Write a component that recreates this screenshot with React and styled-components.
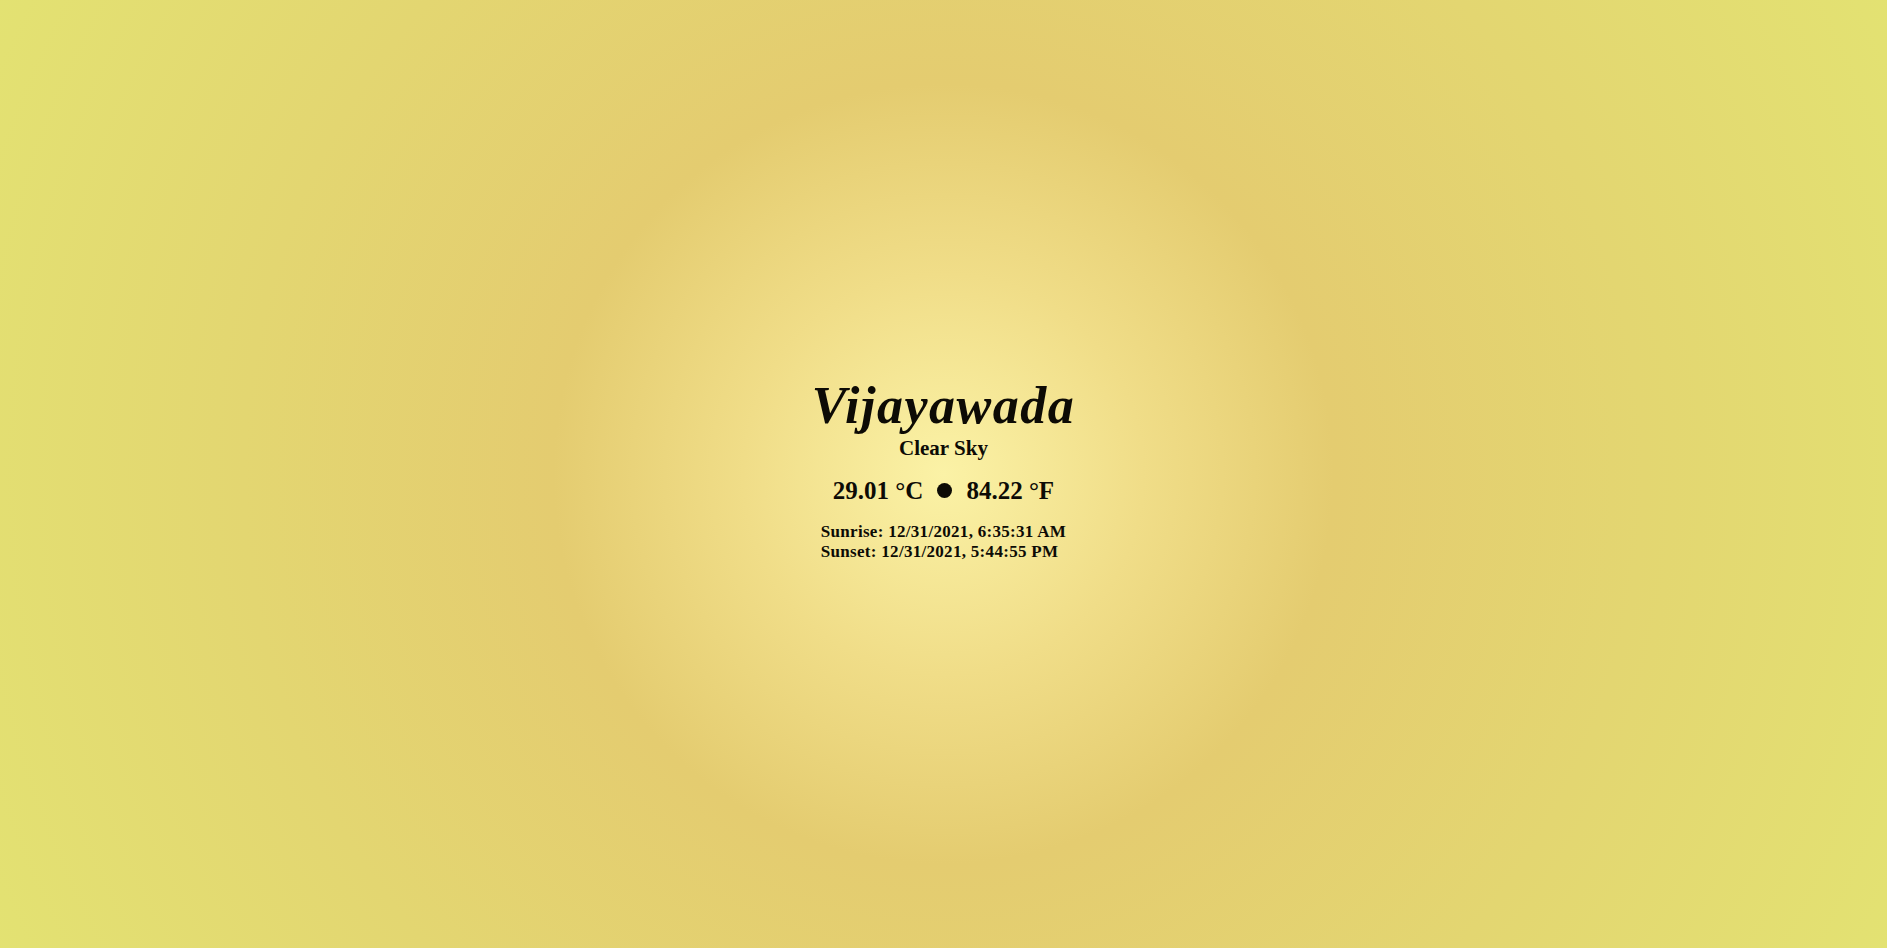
import React from "react";
import styled, { createGlobalStyle } from "styled-components";

const GlobalStyle = createGlobalStyle`
  html, body { margin: 0; padding: 0; }
  body {
    font-family: "Liberation Serif", "DejaVu Serif", serif;
    color: #0d0b05;
  }
`;

const Page = styled.main`
  min-height: 100vh;
  display: flex;
  align-items: center;
  justify-content: center;
  background: radial-gradient(
    circle at 50% 50%,
    #fbf2a6 0px,
    #f0dd88 200px,
    #e4cc70 390px,
    #e3d671 700px,
    #e3e272 1060px
  );
`;

const Card = styled.section`
  display: flex;
  flex-direction: column;
  align-items: center;
  text-align: center;
  padding-bottom: 9px;
`;

const City = styled.h1`
  margin: 0;
  font-size: 52px;
  line-height: 56px;
  font-weight: 700;
  font-style: italic;
  letter-spacing: 1.5px;
`;

const Condition = styled.p`
  margin: 2px 0 0;
  font-size: 21px;
  line-height: 24px;
  font-weight: 700;
`;

const TempRow = styled.div`
  display: flex;
  align-items: center;
  gap: 14px;
  margin-top: 17px;
  font-size: 25px;
  line-height: 28px;
  font-weight: 700;
`;

const Dot = styled.span`
  width: 15px;
  height: 15px;
  border-radius: 50%;
  background: #0d0b05;
`;

const Times = styled.div`
  margin-top: 17px;
  display: flex;
  flex-direction: column;
  align-items: flex-start;
  font-size: 17px;
  line-height: 20px;
  font-weight: 700;
  letter-spacing: 0.3px;
`;

export default function App() {
  return (
    <>
      <GlobalStyle />
      <Page>
        <Card>
          <City>Vijayawada</City>
          <Condition>Clear Sky</Condition>
          <TempRow>
            <span>29.01 °C</span>
            <Dot />
            <span>84.22 °F</span>
          </TempRow>
          <Times>
            <span>Sunrise: 12/31/2021, 6:35:31 AM</span>
            <span>Sunset: 12/31/2021, 5:44:55 PM</span>
          </Times>
        </Card>
      </Page>
    </>
  );
}
